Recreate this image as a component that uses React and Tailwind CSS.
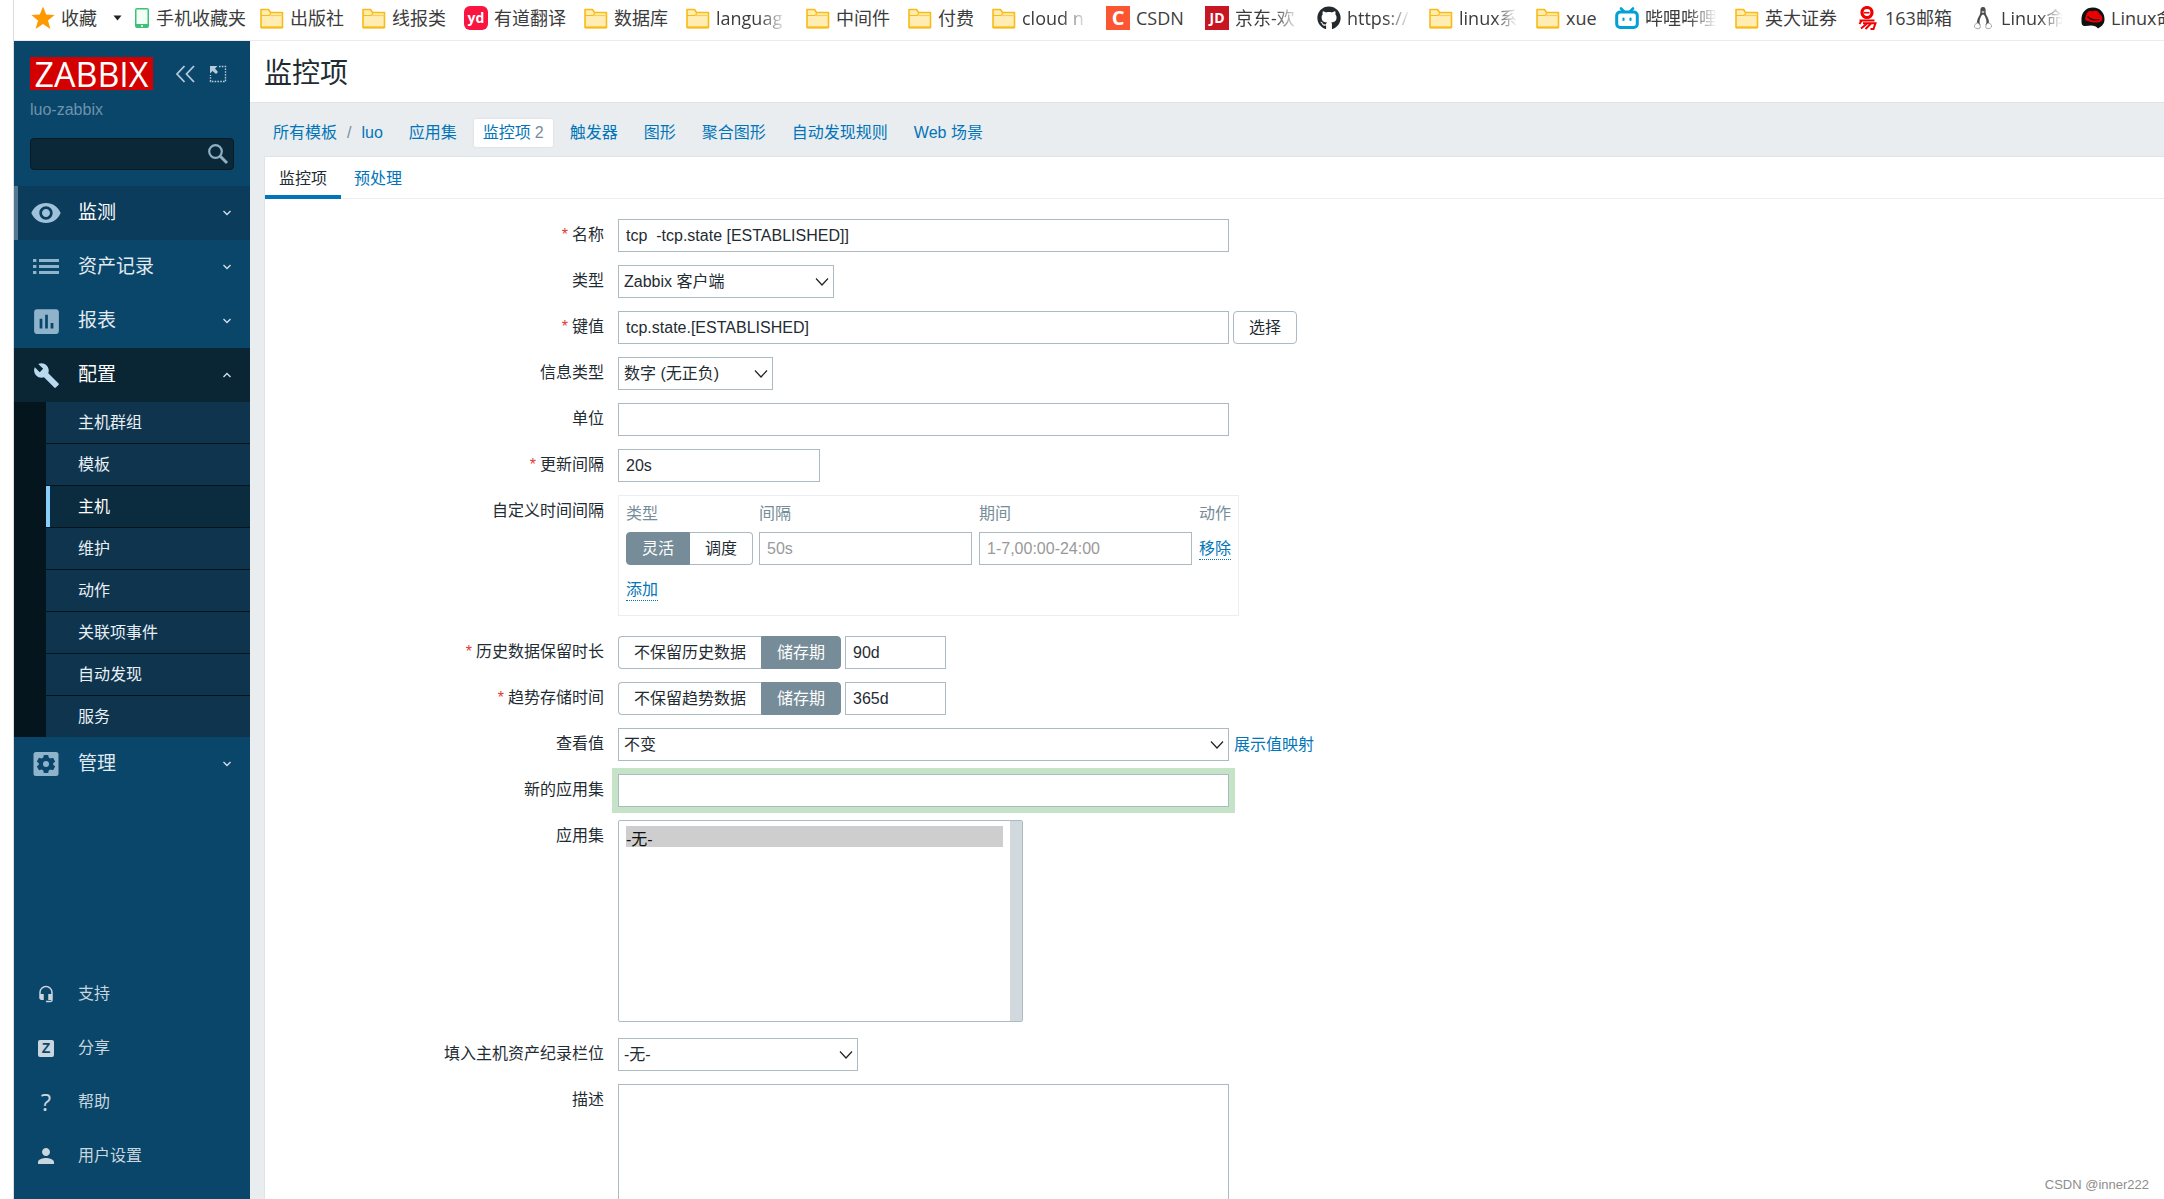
import React from "react";
import { FaGithub } from "react-icons/fa";
import { MdRemoveRedEye, MdInsertChart, MdBuild, MdPerson, MdHeadsetMic } from "react-icons/md";

/* ---------- icons ---------- */

const Folder = () => (
  <svg width="24" height="24" viewBox="0 0 24 24" fill="none">
    <path d="M1 4.5V21.5H22.5V6.5H10.5L8.5 3.5H1Z" fill="#ffedb3" stroke="#f8bb17" strokeWidth="1.6" strokeLinejoin="round" />
    <path d="M1 9.5H9L11 7.5" stroke="#f8bb17" strokeWidth="1.2" />
    <path d="M9 9.5H22.5" stroke="#f8cf55" strokeWidth="1.2" />
    <path d="M1 21.5H22.5" stroke="#f8bb17" strokeWidth="2" />
  </svg>
);

const Star = () => (
  <svg width="24" height="24" viewBox="0 0 24 24" fill="#ff9900">
    <path d="M12 0.5L15.2 8.6L23.6 9L17 14.5L19.4 23L12 18.1L4.6 23L7 14.5L0.4 9L8.8 8.6Z" />
  </svg>
);

const Phone = () => (
  <svg width="16" height="24" viewBox="0 0 16 24" fill="none">
    <rect x="1" y="2" width="14" height="20" rx="2" fill="#41bf76" />
    <rect x="2.5" y="3.5" width="11" height="14.5" fill="#f1fff6" />
    <circle cx="8" cy="20" r="1" fill="#fff" />
  </svg>
);

const Tile = ({ className, children }) => (
  <span className={"flex h-6 w-6 items-center justify-center text-white " + className}>{children}</span>
);

const Bilibili = () => (
  <svg width="24" height="24" viewBox="0 0 24 24" fill="none" stroke="#00a1d6" strokeLinecap="round">
    <path d="M6 2.5L9 5.5M18 2.5L15 5.5" strokeWidth="2.6" />
    <rect x="1.7" y="6" width="20.6" height="15.5" rx="3.5" strokeWidth="3" fill="#fff" />
    <path d="M8.5 12.5V14M15.5 12.5V14" strokeWidth="2.2" />
  </svg>
);

const Netease = () => (
  <svg width="24" height="24" viewBox="0 0 24 24" fill="none" stroke="#f00000">
    <circle cx="12" cy="6.5" r="5" strokeWidth="3.2" />
    <path d="M9 6.7H14.5" strokeWidth="1.6" />
    <path d="M4.5 14.5H19.5M7 14L4.5 18M8 17.2H20.5L18.5 23H15.5M12 17.5L6 22.5M16 17.5L10.5 23" strokeWidth="2" />
  </svg>
);

const Tux = () => (
  <svg width="24" height="24" viewBox="0 0 24 24">
    <path
      d="M12 1C9.6 1 9.2 3 9.4 5.4C9.5 7.6 8.6 9 7.4 11.2C6.2 13.6 5.6 16 6 19L18 19C18.4 16 17.8 13.6 16.6 11.2C15.4 9 14.5 7.6 14.6 5.4C14.8 3 14.4 1 12 1Z"
      fill="#4d4d4d"
    />
    <path d="M12 8.5C10.5 8.5 9.8 11 9 13C8 16 8.6 20 12 20C15.4 20 16 16 15 13C14.2 11 13.5 8.5 12 8.5Z" fill="#fff" />
    <path d="M10.4 5.8L12 7.2L13.6 5.8L12 5Z" fill="#ddd" />
    <path d="M3.5 21C3 19 4.5 17.5 6.5 17C8.5 17.5 10 20 9 22C7.5 23.4 4.5 22.5 3.5 21ZM20.5 21C21 19 19.5 17.5 17.5 17C15.5 17.5 14 20 15 22C16.5 23.4 19.5 22.5 20.5 21Z" fill="#fff" stroke="#9a9a9a" strokeWidth="0.9" />
  </svg>
);

const RedHat = () => (
  <svg width="24" height="24" viewBox="0 0 24 24">
    <path d="M0.5 15C0 6 5 1.5 12 1.5C19 1.5 24 7 23.5 14C23 19 20 20.5 17 22.5C15 19 10 19 4.5 20C1 20 0.5 18 0.5 15Z" fill="#111" />
    <path d="M4 13C5 9 6 5.5 8.5 5C10 4.7 11 5.6 12.5 5C15 4 17.5 5 18.5 8C21 9.5 22 12 21 14.2C19.5 17 14 17 10 16C6.5 15 4 14.5 4 13Z" fill="#e00" />
    <path d="M6.5 10.5C9 13 14 14.5 18.5 13.5" stroke="#111" strokeWidth="1.2" fill="none" />
  </svg>
);

const Collapse = () => (
  <svg width="20" height="18" viewBox="0 0 20 18" fill="none" stroke="#b4cbd9" strokeWidth="1.8">
    <path d="M9.5 1L2 9L9.5 17M19 1L11.5 9L19 17" />
  </svg>
);

const Kiosk = () => (
  <svg width="18" height="18" viewBox="0 0 18 18" fill="none">
    <path d="M1 1H8.5L6 3.5L9 7L7 9L3.5 6L1 8.5Z" fill="#b4cbd9" />
    <path d="M10 1.5H16.5V16.5H1.5V10" stroke="#b4cbd9" strokeWidth="1.4" strokeDasharray="1.6 1.2" />
  </svg>
);

const SearchIcon = () => (
  <svg className="shrink-0" width="22" height="22" viewBox="0 0 22 22" fill="none" stroke="#8fb0c4">
    <circle cx="8.5" cy="8.5" r="6.3" strokeWidth="2.2" />
    <path d="M13 13L20 20" strokeWidth="3" />
  </svg>
);

const ListIcon = () => (
  <svg width="26" height="16" viewBox="0 0 26 16" fill="#8fb3ca">
    {[0, 6, 12].map((y) => (
      <g key={y}>
        <rect x="0" y={y} width="3.4" height="3" />
        <rect x="6" y={y} width="20" height="3" />
      </g>
    ))}
  </svg>
);

const GearTile = () => (
  <svg width="26" height="26" viewBox="0 0 26 26">
    <rect x="0.5" y="1" width="25" height="24" rx="2.5" fill="#8fb3ca" />
    <path
      fill="#0a466a"
      d="M10.8 4h4.4l.5 2.6 1.8 1 2.5-.9 2.2 3.8-2 1.7v1.6l2 1.7-2.2 3.8-2.5-.9-1.8 1-.5 2.6h-4.4l-.5-2.6-1.8-1-2.5.9-2.2-3.8 2-1.7v-1.6l-2-1.7 2.2-3.8 2.5.9 1.8-1Z"
    />
    <circle cx="13" cy="13" r="3" fill="#8fb3ca" />
  </svg>
);

const Chevron = ({ up }) => (
  <svg width="10" height="8" viewBox="0 0 10 8" fill="none" stroke="#cfdde6" strokeWidth="1.4">
    <path d={up ? "M1.5 6L5 2.5L8.5 6" : "M1.5 2L5 5.5L8.5 2"} />
  </svg>
);

/* ---------- bookmarks ---------- */

const fade = "[mask-image:linear-gradient(to_right,black_60%,transparent)]";

const bookmarks = [
  { text: "出版社", icon: <Folder /> },
  { text: "线报类", icon: <Folder /> },
  { text: "有道翻译", icon: <Tile className="rounded-md bg-[#fa1440] text-sm font-bold">yd</Tile> },
  { text: "数据库", icon: <Folder /> },
  { text: "languag", icon: <Folder />, cls: "w-18 " + fade },
  { text: "中间件", icon: <Folder /> },
  { text: "付费", icon: <Folder /> },
  { text: "cloud n", icon: <Folder />, cls: "w-[66px] " + fade },
  { text: "CSDN", icon: <Tile className="bg-[#fc5531] text-xl font-bold">C</Tile>, cls: "w-[51px]" },
  { text: "京东-欢", icon: <Tile className="bg-[#c91623] text-sm font-bold">JD</Tile>, cls: "w-16 " + fade },
  { text: "https://", icon: <FaGithub size={24} color="#24292e" />, cls: "w-16 " + fade },
  { text: "linux系", icon: <Folder />, cls: "w-[59px] " + fade },
  { text: "xue", icon: <Folder />, cls: "w-[31px]" },
  { text: "哔哩哔哩", icon: <Bilibili />, cls: "w-18 " + fade },
  { text: "英大证券", icon: <Folder /> },
  { text: "163邮箱", icon: <Netease />, cls: "w-[68px]" },
  { text: "Linux命", icon: <Tux />, cls: "w-[62px] " + fade },
  { text: "Linux命", icon: <RedHat />, cls: "" },
];

function BookmarkBar() {
  return (
    <nav className="flex h-[41px] shrink-0 items-center overflow-hidden border-b border-[#ebebeb] pb-1 pl-[17px] font-['Open_Sans','Noto_Sans_CJK_SC',sans-serif] text-lg leading-6 whitespace-nowrap text-[#3c3c3c]">
      <a href="#fav" className="flex items-center gap-1.5">
        <Star />
        收藏
      </a>
      <svg className="ml-4 shrink-0" width="9" height="6" viewBox="0 0 9 6" fill="#222">
        <path d="M0.5 0.5H8.5L4.5 5.5Z" />
      </svg>
      <a href="#mobile" className="mr-3.5 ml-3 flex items-center gap-1.5">
        <Phone />
        手机收藏夹
      </a>
      {bookmarks.map((b, i) => (
        <a key={i} href="#bookmark" className="mr-[18px] flex shrink-0 items-center gap-1.5">
          <span className="flex h-6 w-6 items-center justify-center">{b.icon}</span>
          <span className={b.cls || ""}>{b.text}</span>
        </a>
      ))}
    </nav>
  );
}

/* ---------- sidebar ---------- */

const subItems = ["主机群组", "模板", "主机", "维护", "动作", "关联项事件", "自动发现", "服务"];

function MenuItem({ icon, text, up, className = "" }) {
  return (
    <button type="button" className={"flex h-[54px] w-full items-center pr-[18px] text-[19px] " + className}>
      <span className="flex w-16 shrink-0 justify-center">{icon}</span>
      <span className="flex-1 text-left">{text}</span>
      <Chevron up={up} />
    </button>
  );
}

function FooterItem({ icon, text }) {
  return (
    <a href="#footer" className="flex h-[54px] items-center text-base text-[#c9d6df]">
      <span className="flex w-16 justify-center">{icon}</span>
      {text}
    </a>
  );
}

function Sidebar() {
  return (
    <aside className="flex w-[236px] shrink-0 flex-col bg-[#0a466a] pb-4">
      <div className="flex items-center px-4 pt-4">
        <span className="flex h-[33px] w-[123px] items-center justify-center bg-[#d40000] font-['Open_Sans',sans-serif] text-[34px] leading-none text-white">
          ZABBIX
        </span>
        <button type="button" aria-label="收起" className="ml-[22px]">
          <Collapse />
        </button>
        <button type="button" aria-label="隐藏" className="ml-3.5">
          <Kiosk />
        </button>
      </div>
      <div className="px-4 pt-2 text-base leading-6 text-[#6c93ac]">luo-zabbix</div>
      <label className="mx-4 mt-4 mb-4 flex h-8 items-center rounded-sm border border-[#061a24] bg-[#0a2838] pr-1">
        <input type="text" aria-label="搜索" className="h-full w-full min-w-0 bg-transparent px-2 text-white outline-none" />
        <SearchIcon />
      </label>
      <MenuItem icon={<MdRemoveRedEye size={32} color="#9fc2da" />} text="监测" className="bg-[#0b3c5b] text-white shadow-[inset_4px_0_0_#54788f]" />
      <MenuItem icon={<ListIcon />} text="资产记录" className="text-[#e1eaf0]" />
      <MenuItem icon={<MdInsertChart size={33} color="#8fb3ca" />} text="报表" className="text-[#e1eaf0]" />
      <MenuItem icon={<MdBuild size={27} color="#b9d9ee" />} text="配置" up className="bg-[#0a2635] text-white" />
      <ul className="flex flex-col gap-px bg-[#04151e] pl-8 text-base text-[#e8f0f5]">
        {subItems.map((t) => (
          <li key={t}>
            <a
              href="#menu"
              className={
                "flex h-[41px] items-center pl-8 " +
                (t === "主机" ? "bg-[#0b2b3e] text-white shadow-[inset_4px_0_0_#87cefa]" : "bg-[#0f344d]")
              }
            >
              {t}
            </a>
          </li>
        ))}
      </ul>
      <MenuItem icon={<GearTile />} text="管理" className="text-[#e1eaf0]" />
      <div className="flex-1" />
      <FooterItem icon={<MdHeadsetMic size={18} />} text="支持" />
      <FooterItem
        icon={<span className="flex h-[17px] w-4 items-center justify-center rounded-xs bg-[#c9d6df] text-sm leading-none font-bold text-[#0a466a]">Z</span>}
        text="分享"
      />
      <FooterItem icon={<span className="font-['Open_Sans',sans-serif] text-2xl leading-none">?</span>} text="帮助" />
      <FooterItem icon={<MdPerson size={24} />} text="用户设置" />
    </aside>
  );
}

/* ---------- form parts ---------- */

const box = "h-[33px] border border-[#acbbc2] bg-white";

function Row({ label, id, required, children, className = "mb-[13px]" }) {
  return (
    <div className={"flex items-start gap-3.5 " + className}>
      <label htmlFor={id} className="w-[339px] shrink-0 pt-1 text-right leading-6">
        {required && <span className="mr-1 text-[#e33734]">*</span>}
        {label}
      </label>
      {children}
    </div>
  );
}

function Text({ className = "", ...props }) {
  return <input type="text" className={box + " px-[7px] outline-none placeholder:text-[#999] " + className} {...props} />;
}

function Select({ id, value, className }) {
  return (
    <div className={"grid items-center " + className}>
      <select id={id} className={box + " col-start-1 row-start-1 w-full appearance-none px-[5px] outline-none"}>
        <option>{value}</option>
      </select>
      <svg className="pointer-events-none col-start-1 row-start-1 mr-[5px] justify-self-end" width="14" height="10" viewBox="0 0 14 10" fill="none" stroke="#222" strokeWidth="1.2">
        <path d="M1 1.5L7 8L13 1.5" />
      </svg>
    </div>
  );
}

function Segmented({ name, options, active }) {
  return (
    <div className="flex" role="radiogroup">
      {options.map((o, i) => (
        <label
          key={o}
          className={
            "flex h-[33px] items-center border px-[15px] " +
            (i === 0 ? "rounded-l-sm " : "rounded-r-sm ") +
            (i === active ? "border-[#768d99] bg-[#768d99] text-white" : "border-[#acbbc2] bg-white " + (i === 0 ? "border-r-0" : "border-l-0"))
          }
        >
          <input type="radio" name={name} defaultChecked={i === active} className="sr-only" />
          {o}
        </label>
      ))}
    </div>
  );
}

const link = "text-[#0275b8]";
const dotted = "border-b border-dotted border-[#0275b8] text-[#0275b8] leading-5";

function ItemForm() {
  return (
    <form className="pt-5">
      <Row label="名称" id="name" required>
        <Text id="name" className="w-[611px]" defaultValue="tcp  -tcp.state [ESTABLISHED]]" />
      </Row>
      <Row label="类型" id="type">
        <Select id="type" value="Zabbix 客户端" className="w-[216px]" />
      </Row>
      <Row label="键值" id="key" required>
        <div className="flex gap-1">
          <Text id="key" className="w-[611px]" defaultValue="tcp.state.[ESTABLISHED]" />
          <button type="button" className={box + " rounded-sm px-[15px]"}>选择</button>
        </div>
      </Row>
      <Row label="信息类型" id="vtype">
        <Select id="vtype" value="数字 (无正负)" className="w-[155px]" />
      </Row>
      <Row label="单位" id="units">
        <Text id="units" className="w-[611px]" />
      </Row>
      <Row label="更新间隔" id="delay" required>
        <Text id="delay" className="w-[202px]" defaultValue="20s" />
      </Row>
      <Row label="自定义时间间隔" className="mb-5">
        <div className="h-[121px] border border-[#ebeef0] px-[7px] pt-1">
          <table className="text-left">
            <thead>
              <tr className="text-[#768d99]">
                <th className="h-8 pb-1 font-normal">类型</th>
                <th className="pb-1 font-normal">间隔</th>
                <th className="pb-1 font-normal">期间</th>
                <th className="pb-1 font-normal">动作</th>
              </tr>
            </thead>
            <tbody>
              <tr>
                <td className="pr-1.5"><Segmented name="flex" options={["灵活", "调度"]} active={0} /></td>
                <td className="pr-[7px]"><Text aria-label="间隔" placeholder="50s" className="w-[213px]" /></td>
                <td className="pr-[7px]"><Text aria-label="期间" placeholder="1-7,00:00-24:00" className="w-[213px]" /></td>
                <td><button type="button" className={dotted}>移除</button></td>
              </tr>
            </tbody>
          </table>
          <button type="button" className={"mt-[15px] " + dotted}>添加</button>
        </div>
      </Row>
      <Row label="历史数据保留时长" id="history" required>
        <div className="flex gap-1">
          <Segmented name="history_mode" options={["不保留历史数据", "储存期"]} active={1} />
          <Text id="history" className="w-[101px]" defaultValue="90d" />
        </div>
      </Row>
      <Row label="趋势存储时间" id="trends" required>
        <div className="flex gap-1">
          <Segmented name="trends_mode" options={["不保留趋势数据", "储存期"]} active={1} />
          <Text id="trends" className="w-[101px]" defaultValue="365d" />
        </div>
      </Row>
      <Row label="查看值" id="valuemap">
        <div className="flex items-center gap-[5px]">
          <Select id="valuemap" value="不变" className="w-[611px]" />
          <a href="#valuemap" className={link}>展示值映射</a>
        </div>
      </Row>
      <Row label="新的应用集" id="newapp">
        <Text id="newapp" className="w-[611px] ring-6 ring-[#c5e3c7]" />
      </Row>
      <Row label="应用集" id="apps" className="mb-4">
        <div className="flex h-[202px] w-[405px] rounded-xs border border-[#acbbc2]">
          <select id="apps" multiple defaultValue={["0"]} className="h-full flex-1 overflow-hidden px-[7px] pt-[5px] outline-none">
            <option value="0" className="h-[21px] bg-[#cecece] bg-linear-to-r from-[#cecece] to-[#cecece] p-0 leading-[21px]">-无-</option>
          </select>
          <span className="w-3 bg-[#d1d9df]" />
        </div>
      </Row>
      <Row label="填入主机资产纪录栏位" id="inventory">
        <Select id="inventory" value="-无-" className="w-60" />
      </Row>
      <Row label="描述" id="desc">
        <textarea id="desc" className="h-40 w-[611px] resize-none border border-[#acbbc2] outline-none" />
      </Row>
    </form>
  );
}

/* ---------- page ---------- */

const navLinks = ["触发器", "图形", "聚合图形", "自动发现规则", "Web 场景"];

export default function App() {
  return (
    <div className="relative flex h-screen flex-col overflow-hidden bg-white pl-[13px] font-['Liberation_Sans','Noto_Sans_CJK_SC',sans-serif] text-base text-[#1f2c33]">
      <div className="flex min-h-0 flex-1 flex-col border-l border-[#dcdcdc]">
        <BookmarkBar />
        <div className="flex min-h-0 flex-1">
          <Sidebar />
          <main className="flex min-w-0 flex-1 flex-col bg-[#e9edf0]">
            <header className="flex h-[62px] shrink-0 items-center border-b border-[#dfe4e7] bg-white px-3.5 pt-1">
              <h1 className="text-[28px] leading-9">监控项</h1>
            </header>
            <nav className={"flex h-[53px] shrink-0 items-center pt-1.5 pl-[23px] whitespace-nowrap " + link}>
              <a href="#all">所有模板</a>
              <span className="mx-2.5 text-[#768d99]">/</span>
              <a href="#luo">luo</a>
              <a href="#apps-list" className="ml-[26px]">应用集</a>
              <a href="#items" className="mr-[17px] ml-[17px] flex h-7 items-center gap-1 rounded-xs bg-white px-[9px] shadow-[0_0_2px_#ccd5d9]">
                监控项 <span className="text-[#768d99]">2</span>
              </a>
              <span className="flex gap-[26px]">
                {navLinks.map((n) => (
                  <a key={n} href="#nav">{n}</a>
                ))}
              </span>
            </nav>
            <section className="ml-3.5 min-h-0 flex-1 overflow-hidden border-t border-l border-[#dfe4e7] bg-white">
              <div className="flex h-[42px] border-b border-[#ebeef0]" role="tablist">
                <button type="button" role="tab" className="-mb-px border-b-4 border-[#0275b8] px-3.5 pt-1.5">监控项</button>
                <button type="button" role="tab" className={"-mb-px border-b-4 border-transparent px-[13px] pt-1.5 " + link}>预处理</button>
              </div>
              <ItemForm />
            </section>
          </main>
        </div>
      </div>
      <span className="absolute right-[15px] bottom-1 text-[13px] leading-5 text-[#8e8e8e]">CSDN @inner222</span>
    </div>
  );
}
